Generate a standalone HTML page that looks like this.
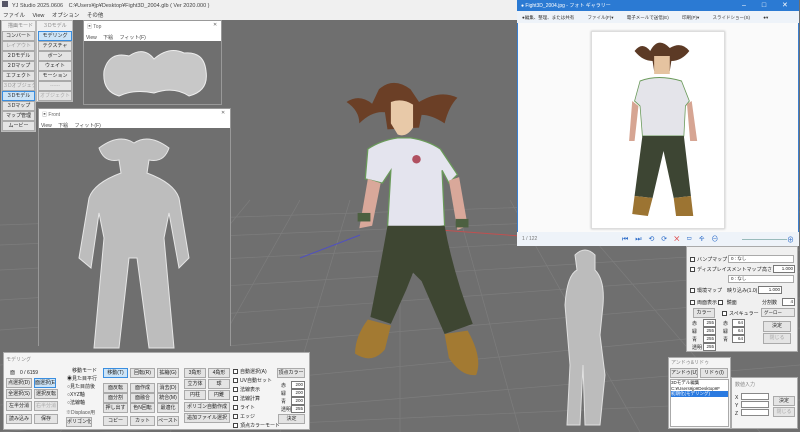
<!DOCTYPE html>
<html><head><meta charset="utf-8"><style>
*{margin:0;padding:0;box-sizing:border-box}
body{width:800px;height:432px;overflow:hidden;background:#6f6f6f;font-family:"Liberation Sans","Noto Sans CJK JP",sans-serif;font-size:5px;color:#222;position:relative}
.a{position:absolute;white-space:nowrap}
.btn{position:absolute;background:#e4e4e4;border:1px solid #aaa;font-size:5px;text-align:center;line-height:8px;color:#222;white-space:nowrap;overflow:hidden}
.sel{background:#cce4f7;border-color:#3a8ee0}
.win{position:absolute;background:#fff;border:1px solid #999}
.vp{position:absolute;background:#6f6f6f;overflow:hidden}
.chk{display:inline-block;width:5px;height:5px;border:1px solid #444;background:#fff;vertical-align:middle;margin-right:2px}
.inp{position:absolute;background:#fff;border:1px solid #777;font-size:4.5px;text-align:right;line-height:6px;padding-right:1px}
</style></head><body>
<svg class="a" style="left:0;top:0" width="800" height="432">
<g stroke="#7d7d7d" stroke-width="0.7" fill="none">
<path d="M0 300 L800 250 M0 330 L800 272 M0 365 L800 298 M0 405 L800 328 M0 432 L800 365 M100 432 L800 400 M0 270 L800 230 M0 245 L800 212 M0 225 L800 198"/>
<path d="M60 432 L250 200 M170 432 L300 200 M280 432 L350 200 M400 432 L400 200 M520 432 L455 200 M640 432 L510 200 M760 432 L560 200"/>
</g>
<path d="M300 258 L360 235" stroke="#5050c0" stroke-width="1"/>
<path d="M440 230 L520 236" stroke="#c05050" stroke-width="1"/>
</svg>
<div class="a" style="left:0;top:0;width:520px;height:20px;background:#f0f0f0"></div>
<div class="a" style="left:2px;top:1px;width:6px;height:6px;background:#556"></div>
<div class="a" style="left:12px;top:1px;font-size:5.5px;color:#444">YJ Studio 2025.0606　C:¥Users¥jp¥Desktop¥Fight3D_2004.glb ( Ver 2020.000 )</div>
<div class="a" style="left:3px;top:11px;font-size:5.5px;color:#333;word-spacing:6px">ファイル View オプション その他</div>
<div class="a" style="left:1px;top:20px;width:35px;height:112px;background:#f0f0f0;border:1px solid #bbb"></div>
<div class="a" style="left:36px;top:20px;width:37px;height:82px;background:#f0f0f0;border:1px solid #bbb"></div>
<div class="a" style="left:8px;top:22px;color:#888">描画モード</div>
<div class="a" style="left:43px;top:22px;color:#888">３Dモデル</div>
<div class="btn" style="left:2px;top:31px;width:33px">コンバート</div>
<div class="btn" style="left:2px;top:41px;width:33px;color:#999">レイアウト</div>
<div class="btn" style="left:2px;top:51px;width:33px">２Dモデル</div>
<div class="btn" style="left:2px;top:61px;width:33px">２Dマップ</div>
<div class="btn" style="left:2px;top:71px;width:33px">エフェクト</div>
<div class="btn" style="left:2px;top:81px;width:33px;color:#999">３Dオブジェクト</div>
<div class="btn sel" style="left:2px;top:91px;width:33px">３Dモデル</div>
<div class="btn" style="left:2px;top:101px;width:33px">３Dマップ</div>
<div class="btn" style="left:2px;top:111px;width:33px">マップ管理</div>
<div class="btn" style="left:2px;top:121px;width:33px">ムービー</div>
<div class="btn sel" style="left:38px;top:31px;width:34px">モデリング</div>
<div class="btn" style="left:38px;top:41px;width:34px">テクスチャ</div>
<div class="btn" style="left:38px;top:51px;width:34px">ボーン</div>
<div class="btn" style="left:38px;top:61px;width:34px">ウェイト</div>
<div class="btn" style="left:38px;top:71px;width:34px">モーション</div>
<div class="btn" style="left:38px;top:81px;width:34px;color:#aaa">------</div>
<div class="btn" style="left:38px;top:91px;width:34px;color:#aaa">オブジェクト</div>
<div class="win" style="left:83px;top:20px;width:139px;height:85px"></div>
<div class="a" style="left:87px;top:23px;color:#666">▣ Top</div><div class="a" style="left:213px;top:22px;color:#666">✕</div>
<div class="a" style="left:86px;top:34px;color:#444;word-spacing:5px">View 下絵 フィット(F)</div>
<div class="vp" style="left:84px;top:41px;width:137px;height:63px">
<svg width="137" height="63"><path d="M20 30 Q25 10 45 15 Q60 5 70 18 Q85 5 100 12 Q120 10 122 30 Q125 50 105 55 Q90 45 70 52 Q50 48 35 55 Q18 50 20 30Z" fill="#c8c8c8" stroke="#eee" stroke-width="1"/></svg></div>
<div class="win" style="left:38px;top:108px;width:193px;height:238px;border-bottom:none"></div>
<div class="a" style="left:42px;top:111px;color:#666">▣ Front</div><div class="a" style="left:221px;top:110px;color:#666">✕</div>
<div class="a" style="left:41px;top:122px;color:#444;word-spacing:5px">View 下絵 フィット(F)</div>
<div class="vp" style="left:39px;top:128px;width:191px;height:225px">
<svg width="191" height="225" fill="#bdbdbd" stroke="#e6e6e6" stroke-width="1">
<path d="M60 20 Q80 5 95 15 Q110 5 130 20 Q125 35 110 32 L108 45 Q135 55 140 70 L150 130 L140 140 L130 85 L125 110 L135 220 L110 220 L98 130 L90 130 L80 220 L55 220 L65 110 L60 85 L52 140 L40 130 L50 70 Q55 55 82 45 L80 32 Q65 35 60 20Z"/></svg></div>
<svg class="a" style="left:555px;top:245px" width="60" height="185" fill="#bcbcbc" stroke="#e0e0e0">
<path d="M20 10 Q30 0 40 10 L40 25 Q50 35 48 60 L45 90 L50 130 L45 180 L30 180 L28 120 L25 180 L12 180 L15 120 L10 60 Q12 30 22 25Z"/></svg>
<!-- character -->
<svg class="a" style="left:338px;top:50px" width="145" height="360" viewBox="20 0 170 360">
<path d="M30 30 Q45 20 60 32 L68 15 Q85 0 105 15 L115 30 Q140 15 160 25 Q150 35 145 55 Q130 45 118 45 L115 60 L78 62 L75 42 Q60 40 45 55 Q45 40 30 30Z" fill="#6b3f26"/>
<path d="M82 30 Q95 25 108 33 L108 60 Q100 72 90 68 L82 55Z" fill="#e8c9a8"/>
<path d="M55 85 Q70 75 90 72 L105 72 Q125 75 140 85 L160 115 L150 125 L142 110 L145 175 Q120 180 92 178 L78 178 L82 110 L72 125 L52 120Z" fill="#e4e4ee" stroke="#6a9a5a" stroke-width="1.5"/>
<circle cx="112" cy="97" r="5" fill="#b05060"/>
<path d="M55 120 L70 125 L60 175 L45 178Z M150 122 L162 118 L172 175 L160 180Z" fill="#d9a89a"/>
<rect x="43" y="160" width="15" height="10" fill="#4c6040"/><rect x="158" y="167" width="15" height="10" fill="#4c6040"/>
<path d="M78 175 L145 175 Q155 230 178 290 L145 302 L118 240 L108 230 L100 250 L82 290 L58 282 Q70 220 78 175Z" fill="#3e4632"/>
<path d="M55 285 L82 292 L75 320 Q60 338 40 325 Q40 305 55 285Z M145 302 L172 298 Q190 330 182 350 Q165 352 150 330Z" fill="#a37a32"/>
</svg>
<!-- Photo viewer -->
<div class="a" style="left:517px;top:0;width:282px;height:246px;background:#fafafa;border:1px solid #3b7fcf"></div>
<div class="a" style="left:517px;top:0;width:282px;height:11px;background:#2b7ad3"></div>
<div class="a" style="left:521px;top:2px;color:#fff;font-size:5px">● Fight3D_2004.jpg - フォト ギャラリー</div>
<div class="a" style="left:742px;top:1px;color:#fff;font-size:7px;word-spacing:14px">– □ ✕</div>
<div class="a" style="left:517px;top:11px;width:282px;height:12px;background:#eef3f9"></div>
<div class="a" style="left:522px;top:15px;font-size:4.5px;color:#333;word-spacing:12px">●編集、整理、または共有 ファイル(F)▾ 電子メールで送信(E) 印刷(P)▾ スライドショー(S) ●▾</div>
<div class="a" style="left:591px;top:31px;width:134px;height:198px;background:#fff;border:1px solid #ddd;box-shadow:0 0 2px #bbb"></div>
<svg class="a" style="left:615px;top:36px" width="90" height="190" viewBox="0 0 115 190" preserveAspectRatio="none">
<path d="M25 15 Q35 5 45 15 Q55 0 70 12 Q85 5 95 15 Q85 25 72 25 L70 35 L50 35 L48 25 Q35 25 25 15Z" fill="#5c3a25"/>
<path d="M50 20 L70 20 L70 38 L50 38Z" fill="#e5c3a0"/>
<path d="M32 45 Q55 38 85 45 L95 65 L90 70 L88 100 L35 100 L32 70 L25 65Z" fill="#e4e4ea" stroke="#6a9a5a"/>
<path d="M22 65 L30 70 L25 105 L18 105Z M92 68 L98 65 L105 105 L96 105Z" fill="#d6a593"/>
<path d="M35 100 L88 100 L97 160 L75 162 L62 115 L48 162 L25 160Z" fill="#3d4533"/>
<path d="M25 160 L48 162 L42 180 L22 178Z M75 162 L97 160 L100 180 L78 180Z" fill="#9c7432"/></svg>
<div class="a" style="left:517px;top:232px;width:282px;height:14px;background:#eef3f9"></div>
<div class="a" style="left:522px;top:236px;color:#777;font-size:5px">1 / 122</div>
<div class="a" style="left:622px;top:234px;color:#2a6ac8;font-size:7px;word-spacing:5px">⏮ ⏭ ⟲ ⟳ <span style="color:#d33">✕</span> ▭ ✥ ⊖</div>
<div class="a" style="left:742px;top:239px;width:45px;height:1px;background:#9bb"></div>
<div class="a" style="left:787px;top:235px;color:#2a6ac8;font-size:7px">⊕</div>
<!-- right property panel -->
<div class="a" style="left:686px;top:246px;width:112px;height:106px;background:#f0f0f0;border:1px solid #aaa"></div>
<div class="a" style="left:690px;top:256px"><span class="chk"></span>バンプマップ</div>
<div class="a" style="left:728px;top:255px;width:66px;height:8px;background:#fff;border:1px solid #aaa;font-size:4.5px;line-height:6px;padding-left:2px">0 : なし</div>
<div class="a" style="left:690px;top:266px"><span class="chk"></span>ディスプレイスメントマップ</div>
<div class="a" style="left:762px;top:266px">高さ</div><div class="inp" style="left:773px;top:265px;width:22px;height:8px">1.000</div>
<div class="a" style="left:728px;top:275px;width:66px;height:8px;background:#fff;border:1px solid #aaa;font-size:4.5px;line-height:6px;padding-left:2px">0 : なし</div>
<div class="a" style="left:690px;top:287px"><span class="chk"></span>環境マップ　映り込み(1.0)</div>
<div class="inp" style="left:758px;top:286px;width:24px;height:8px">1.000</div>
<div class="a" style="left:690px;top:299px"><span class="chk"></span>両面表示 <span class="chk"></span> 鏡面</div>
<div class="a" style="left:762px;top:299px">分割数</div><div class="inp" style="left:782px;top:298px;width:13px;height:8px">4</div>
<div class="btn" style="left:693px;top:308px;width:22px">カラー</div>
<div class="a" style="left:722px;top:310px"><span class="chk"></span>スペキュラー</div>
<div class="a" style="left:761px;top:308px;width:34px;height:9px;background:#e8e8e8;border:1px solid #aaa;font-size:4.5px;line-height:7px;padding-left:2px">グーロー</div>
<div class="a" style="left:692px;top:320px;line-height:8px">赤<br>緑<br>青<br>透明</div>
<div class="inp" style="left:703px;top:319px;width:13px;height:8px">255</div><div class="inp" style="left:703px;top:327px;width:13px;height:8px">255</div><div class="inp" style="left:703px;top:335px;width:13px;height:8px">255</div><div class="inp" style="left:703px;top:343px;width:13px;height:8px">255</div>
<div class="a" style="left:723px;top:320px;line-height:8px">赤<br>緑<br>青</div>
<div class="inp" style="left:732px;top:319px;width:13px;height:8px">64</div><div class="inp" style="left:732px;top:327px;width:13px;height:8px">64</div><div class="inp" style="left:732px;top:335px;width:13px;height:8px">64</div>
<div class="btn" style="left:763px;top:321px;width:28px;height:11px;line-height:9px">決定</div>
<div class="btn" style="left:763px;top:333px;width:28px;height:11px;line-height:9px;color:#aaa">閉じる</div>
<!-- bottom modeling panel -->
<div class="a" style="left:3px;top:352px;width:307px;height:78px;background:#f4f4f4;border:1px solid #aaa"></div>
<div class="a" style="left:6px;top:356px;color:#888">モデリング</div>
<div class="a" style="left:10px;top:369px">面　0 / 6159</div>
<div class="btn" style="left:6px;top:378px;width:26px">点選択(D)</div><div class="btn sel" style="left:34px;top:378px;width:22px">面選択(E)</div>
<div class="btn" style="left:6px;top:389px;width:26px">全選択(S)</div><div class="btn" style="left:34px;top:389px;width:24px">選択反転</div>
<div class="btn" style="left:6px;top:401px;width:26px">左半分消</div><div class="btn" style="left:34px;top:401px;width:24px;color:#aaa">右半分消</div>
<div class="btn" style="left:6px;top:414px;width:26px">読み込み</div><div class="btn" style="left:34px;top:414px;width:24px">保存</div>
<div class="a" style="left:67px;top:367px;line-height:8px">　移動モード<br>◉見た目平行<br>○見た目前後<br>○XYZ軸<br>○法線軸</div>
<div class="a" style="left:66px;top:409px;color:#555">※Displace用</div>
<div class="btn" style="left:66px;top:417px;width:26px">ポリゴン化</div>
<div class="btn sel" style="left:103px;top:368px;width:25px">移動(T)</div><div class="btn" style="left:130px;top:368px;width:25px">回転(R)</div><div class="btn" style="left:157px;top:368px;width:22px">拡縮(G)</div>
<div class="btn" style="left:103px;top:383px;width:25px">面反転</div><div class="btn" style="left:130px;top:383px;width:25px">面作成</div><div class="btn" style="left:157px;top:383px;width:22px">消去(D)</div>
<div class="btn" style="left:103px;top:393px;width:25px">面分割</div><div class="btn" style="left:130px;top:393px;width:25px">面融合</div><div class="btn" style="left:157px;top:393px;width:22px">統合(M)</div>
<div class="btn" style="left:103px;top:403px;width:25px">押し出す</div><div class="btn" style="left:130px;top:403px;width:25px">色N回転</div><div class="btn" style="left:157px;top:403px;width:22px">最適化</div>
<div class="btn" style="left:103px;top:416px;width:25px">コピー</div><div class="btn" style="left:130px;top:416px;width:25px">カット</div><div class="btn" style="left:157px;top:416px;width:22px">ペースト</div>
<div class="btn" style="left:184px;top:368px;width:22px">3角形</div><div class="btn" style="left:208px;top:368px;width:22px">4角形</div>
<div class="btn" style="left:184px;top:379px;width:22px">立方体</div><div class="btn" style="left:208px;top:379px;width:22px">球</div>
<div class="btn" style="left:184px;top:390px;width:22px">円柱</div><div class="btn" style="left:208px;top:390px;width:22px">円錐</div>
<div class="btn" style="left:184px;top:402px;width:46px">ポリゴン自動作成</div>
<div class="btn" style="left:184px;top:413px;width:46px">追加ファイル選択</div>
<div class="a" style="left:233px;top:368px;line-height:9px"><span class="chk"></span>自動選択(A)<br><span class="chk"></span>UV自動セット<br><span class="chk"></span>法線表示<br><span class="chk"></span>法線計算<br><span class="chk"></span>ライト<br><span class="chk"></span>エッジ<br><span class="chk"></span>頂点カラーモード</div>
<div class="btn" style="left:277px;top:368px;width:28px">頂点カラー</div>
<div class="a" style="left:281px;top:382px;line-height:8px">赤<br>緑<br>青<br>透明</div>
<div class="inp" style="left:291px;top:381px;width:14px;height:8px">200</div><div class="inp" style="left:291px;top:389px;width:14px;height:8px">200</div><div class="inp" style="left:291px;top:397px;width:14px;height:8px">200</div><div class="inp" style="left:291px;top:405px;width:14px;height:8px">255</div>
<div class="btn" style="left:278px;top:414px;width:27px">決定</div>
<!-- undo panel -->
<div class="a" style="left:668px;top:357px;width:63px;height:72px;background:#f4f4f4;border:1px solid #aaa"></div>
<div class="a" style="left:671px;top:359px;color:#888">アンドゥ&リドゥ</div>
<div class="btn" style="left:670px;top:368px;width:28px">アンドゥ(U)</div><div class="btn" style="left:700px;top:368px;width:28px">リドゥ(I)</div>
<div class="a" style="left:670px;top:379px;width:59px;height:48px;background:#fff;border:1px solid #aaa;font-size:4.5px;line-height:5.5px;overflow:hidden">3Dモデル編集<br>C:¥Users¥jp¥Desktop¥F<br><span style="background:#2a7ae0;color:#fff;display:block">初期化(モデリング)</span></div>
<!-- numeric input -->
<div class="a" style="left:731px;top:377px;width:67px;height:52px;background:#f4f4f4;border:1px solid #aaa"></div>
<div class="a" style="left:735px;top:381px;color:#888">数値入力</div>
<div class="a" style="left:735px;top:394px;line-height:8px">X<br>Y<br>Z</div>
<div class="a" style="left:741px;top:393px;width:28px;height:7px;background:#fff;border:1px solid #888"></div>
<div class="a" style="left:741px;top:401px;width:28px;height:7px;background:#fff;border:1px solid #888"></div>
<div class="a" style="left:741px;top:409px;width:28px;height:7px;background:#fff;border:1px solid #888"></div>
<div class="btn" style="left:773px;top:396px;width:22px">決定</div>
<div class="btn" style="left:773px;top:407px;width:22px;color:#aaa">閉じる</div>
</body></html>
